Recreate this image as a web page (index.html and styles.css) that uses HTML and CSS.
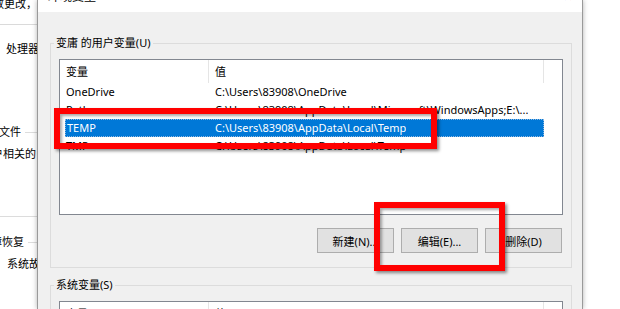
FILE: index.html
```html
<!DOCTYPE html>
<html lang="zh-CN">
  <head>
    <meta charset="UTF-8" />
    <title>环境变量</title>
    <link rel="stylesheet" href="styles.css">
  </head>
  <body>
    <div class="screen">
      <!-- 背后的系统属性窗口 -->
      <div class="side">
        <div class="side-top">
          <div class="clip-left"><span>要进行大多数更改，</span></div>
        </div>
        <div class="side-text perf">处理器计划，内存使用</div>
        <div class="side-label profile">
          <div class="clip-left narrow"><span>用户配置文件</span></div>
          <div class="side-line"></div>
        </div>
        <div class="side-text desc">
          <div class="clip-left"><span>与登录帐户相关的</span></div>
        </div>
        <div class="side-rule"></div>
        <div class="side-label recover">
          <div class="clip-left wide"><span>启动和故障恢复</span></div>
          <div class="side-line"></div>
        </div>
        <div class="side-text sys">系统故障和调试信息</div>
      </div>

      <!-- 环境变量 对话框 -->
      <div class="dialog">
        <div class="titlebar">
          <span class="title">环境变量</span>
          <span class="close">✕</span>
        </div>
        <div class="dialog-body">
          <fieldset class="group">
            <legend>变庸 的用户变量(U)</legend>
            <div class="listview">
              <div class="lv-head">
                <div class="lv-col name">变量</div>
                <div class="lv-col value">值</div>
              </div>
              <div class="lv-row">
                <div class="lv-cell name">OneDrive</div>
                <div class="lv-cell value">C:\Users\83908\OneDrive</div>
              </div>
              <div class="lv-row">
                <div class="lv-cell name">Path</div>
                <div class="lv-cell value">C:\Users\83908\AppData\Local\Microsoft\WindowsApps;E:\...</div>
              </div>
              <div class="lv-row selected">
                <div class="lv-cell name">TEMP</div>
                <div class="lv-cell value">C:\Users\83908\AppData\Local\Temp</div>
              </div>
              <div class="lv-row">
                <div class="lv-cell name">TMP</div>
                <div class="lv-cell value">C:\Users\83908\AppData\Local\Temp</div>
              </div>
            </div>
            <div class="buttons">
              <button class="btn">新建(N)...</button>
              <button class="btn">编辑(E)...</button>
              <button class="btn">删除(D)</button>
            </div>
          </fieldset>

          <fieldset class="group second">
            <legend>系统变量(S)</legend>
            <div class="listview">
              <div class="lv-head">
                <div class="lv-col name">变量</div>
                <div class="lv-col value">值</div>
              </div>
            </div>
          </fieldset>
        </div>
      </div>

      <div class="backdrop"></div>

      <!-- 红色标注框 -->
      <div class="mark mark-row"></div>
      <div class="mark mark-btn"></div>
    </div>
  </body>
</html>
```

FILE: styles.css
```css
body {
  margin: 0;
  width: 620px;
  height: 309px;
  overflow: hidden;
  background: #fff;
  font-family: "Noto Sans", "Noto Sans CJK SC", sans-serif;
  font-size: 11px;
  color: #000;
}

.screen {
  position: relative;
  display: flex;
  height: 309px;
}

/* 左侧的系统属性窗口 */
.side {
  width: 37px;
  flex-shrink: 0;
  display: flex;
  flex-direction: column;
  background: #fff;
  overflow: hidden;
}

.side-top {
  height: 24px;
  border-bottom: 1px solid #dadada;
}

.side-top .clip-left {
  margin-top: -3px;
  line-height: 14px;
}

.clip-left {
  display: flex;
  justify-content: flex-end;
  overflow: hidden;
  white-space: nowrap;
  line-height: 14px;
}

.clip-left span {
  flex-shrink: 0;
}

.clip-left.narrow {
  width: 21px;
  flex-shrink: 0;
}

.clip-left.wide {
  width: 24px;
  flex-shrink: 0;
}

.side-text {
  white-space: nowrap;
  line-height: 14px;
}

.perf {
  margin-top: 17px;
  padding-left: 6px;
}

.side-label {
  display: flex;
  align-items: center;
}

.side-line {
  flex: 1;
  height: 1px;
  margin-left: 4px;
  background: #dcdcdc;
}

.profile {
  margin-top: 69px;
}

.desc {
  margin-top: 8px;
}

.desc .clip-left {
  margin-right: 1px;
}

.side-rule {
  height: 1px;
  margin-top: 55px;
  background: #dcdcdc;
}

.recover {
  margin-top: 18px;
}

.sys {
  margin-top: 8px;
  padding-left: 7px;
}

/* 对话框 */
.dialog {
  width: 544px;
  flex-shrink: 0;
  border-left: 1px solid #9a9a9a;
  border-right: 1px solid #9a9a9a;
  background: #f0f0f0;
  box-shadow: 0 0 5px rgba(0, 0, 0, 0.3);
  z-index: 1;
}

.titlebar {
  height: 12px;
  display: flex;
  justify-content: space-between;
  background: #fff;
  overflow: hidden;
}

.title {
  margin: -10px 0 0 10px;
  line-height: 14px;
  font-size: 12px;
}

.close {
  margin: -10px 9px 0 0;
  line-height: 14px;
  font-size: 12px;
  color: #222;
}

.dialog-body {
  display: flex;
  flex-direction: column;
}

.group {
  margin: 24px 10px 0 12px;
  padding: 9px 8px 14px 8px;
  border: 1px solid #dcdcdc;
  min-width: 0;
}

.group legend {
  margin-left: -5px;
  padding: 0 2px;
  line-height: 14px;
}

.group.second {
  margin-top: 10px;
}

/* 列表 */
.listview {
  box-sizing: border-box;
  height: 156px;
  border: 1px solid #828790;
  background: #fff;
  overflow: hidden;
}

.lv-head {
  display: flex;
  height: 23px;
}

.lv-col {
  box-sizing: border-box;
  padding-left: 6px;
  line-height: 23px;
  border-right: 1px solid #e5e5e5;
}

.lv-col.name {
  width: 149px;
}

.lv-col.value {
  width: 335px;
}

.lv-row {
  display: flex;
  width: 479px;
  height: 18px;
  margin-left: 5px;
  line-height: 18px;
  white-space: nowrap;
}

.lv-cell.name {
  box-sizing: border-box;
  width: 144px;
  padding-left: 1px;
}

.lv-cell.value {
  padding-left: 6px;
  overflow: hidden;
}

.lv-row.selected {
  box-sizing: border-box;
  background: #0078d7;
  color: #fff;
  outline: 1px dotted #8fb8e0;
  outline-offset: -1px;
}

.lv-row.selected .name {
  padding-left: 2px;
}

/* 按钮 */
.buttons {
  display: flex;
  justify-content: flex-end;
  gap: 7px;
  margin: 13px 1px 0 0;
}

.btn {
  width: 77px;
  height: 25px;
  padding: 0;
  border: 1px solid #adadad;
  background: #e1e1e1;
  font-family: inherit;
  font-size: 11px;
  color: #000;
}

.backdrop {
  flex: 1;
  background: #fff;
}

/* 红框 */
.mark {
  position: absolute;
  box-sizing: border-box;
  border: 6px solid #f00;
  box-shadow: 2px 2px 3px rgba(0, 0, 0, 0.45), inset 2px 2px 3px rgba(0, 0, 0, 0.35);
  z-index: 2;
}

.mark-row {
  left: 54px;
  top: 108px;
  width: 383px;
  height: 41px;
}

.mark-btn {
  left: 374px;
  top: 202px;
  width: 131px;
  height: 69px;
}
```
